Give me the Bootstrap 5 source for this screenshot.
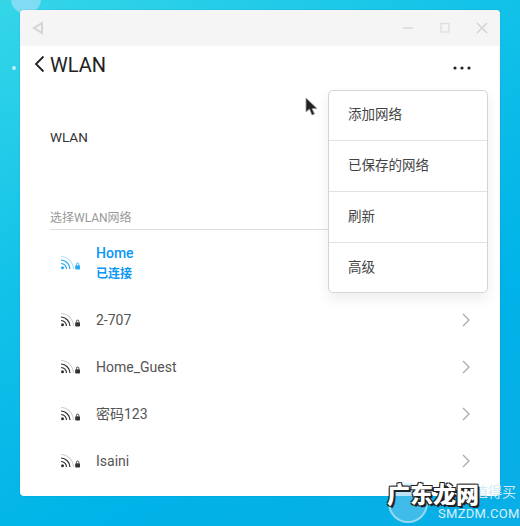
<!DOCTYPE html>
<html lang="zh-CN">
<head>
  <meta charset="UTF-8" />
  <meta name="viewport" content="width=device-width, initial-scale=1" />
  <title>WLAN</title>
  <link href="https://cdn.jsdelivr.net/npm/bootstrap@5.3.3/dist/css/bootstrap.min.css" rel="stylesheet" />
  <style>
    html, body { height: 526px; overflow: hidden; }
    body {
      font-family: Roboto, "Noto Sans CJK SC", sans-serif;
      background: linear-gradient(150deg, #35d6e8 0%, #12c2e8 35%, #00b3e8 70%, #0aaee6 100%);
      padding: 10px 20px 30px;
      position: relative;
    }
    .glow { position: absolute; left: 11px; top: -16px; width: 30px; height: 30px; border-radius: 50%; background: #7fdcf3; }
    .spark { position: absolute; left: 12px; top: 66px; width: 4px; height: 4px; border-radius: 50%; background: #bdf0f8; }
    .win { width: 480px; height: 486px; background: #fff; border-radius: 4px; overflow: hidden; position: relative; box-shadow: 0 0 1px rgba(0,80,120,.6); }
    .titlebar { height: 36px; background: #f5f5f5; padding: 0 12px; }
    .titlebar svg { display: block; }
    .head { height: 36px; padding: 0 29px 0 14px; color: #222; }
    .head-title { font-size: 20px; line-height: 36px; margin-left: 5px; padding-top: 1px; }
    .head-dots { margin-top: 8px; }
    .wlan-row { height: 88px; margin-top: 33px; padding-left: 30px; font-size: 13.5px; color: #333; padding-top: 12px; line-height: 20px; }
    .sec-label { margin: 7px 29px 0 30px; padding-bottom: 3px; font-size: 12px; line-height: 16px; color: #999; border-bottom: 1px solid #dedede; }
    .net { height: 47px; padding: 0 30px 0 41px; font-size: 14px; color: #555; }
    .net-first { height: 66px; }
    .net-name { margin-left: 15px; flex: 1 1 auto; line-height: 20px; }
    .net-first .net-name { color: #0a97f8; font-weight: 500; font-size: 14px; }
    .net-state { font-size: 12px; font-weight: 700; padding-top: 1px; }
    .pop {
      position: absolute; left: 308px; top: 80px; width: 160px;
      background: #fff; border: 1px solid #d4d4d4; border-radius: 5px;
      box-shadow: 0 6px 14px rgba(0,0,0,.07);
    }
    .pop-item { height: 51px; padding-left: 19px; font-size: 13.5px; color: #444; line-height: 49px; border-bottom: 1px solid #e2e2e2; }
    .pop-item:first-child { height: 50px; line-height: 47px; }
    .pop-item:last-child { height: 49px; border-bottom: 0; }
    .cursor { position: absolute; left: 285px; top: 87px; }
    .wm { position: absolute; left: 386px; top: 484px; width: 134px; height: 42px; color: #fff; }
    .wm-cn { position: absolute; left: 1px; top: -3px; font-size: 23px; line-height: 30px; font-weight: 900; white-space: nowrap;
      text-shadow: 1px 1px 0 #222, -1px -1px 0 #222, 1px -1px 0 #222, -1px 1px 0 #222, 2px 2px 0 #222; }
    .wm-side { position: absolute; left: 88px; top: -2px; font-size: 14px; line-height: 20px; color: #cfe9f5; white-space: nowrap; }
    .wm-en { position: absolute; left: 52px; top: 21px; font-size: 13px; line-height: 18px; letter-spacing: .3px; color: #d8f0fa; white-space: nowrap; }
    .wm-disc { position: absolute; left: 2px; top: -1px; width: 40px; height: 40px; border-radius: 50%; background: rgba(120,200,235,.5); border: 2px solid rgba(255,255,255,.45); }
  </style>
</head>
<body>
  <div class="glow"></div>
  <div class="spark"></div>

  <div class="win">
    <div class="titlebar d-flex align-items-center">
      <svg width="12" height="14" viewBox="0 0 12 14"><path d="M10 2 L2 7 L10 12 Z" fill="none" stroke="#d4d4d4" stroke-width="2"/></svg>
      <div class="d-flex align-items-center ms-auto gap-4">
        <svg width="11" height="12" viewBox="0 0 11 12"><path d="M0 6H10" stroke="#d9d9d9" stroke-width="1.5"/></svg>
        <svg width="14" height="12" viewBox="0 0 14 12"><rect x="3" y="1.5" width="8" height="8.5" fill="none" stroke="#dedede" stroke-width="1.3"/></svg>
        <svg width="12" height="12" viewBox="0 0 12 12"><path d="M1 1L11 11M11 1L1 11" stroke="#d6d6d6" stroke-width="1.7"/></svg>
      </div>
    </div>

    <div class="head d-flex align-items-center">
      <svg width="11" height="18" viewBox="0 0 11 18"><path d="M9.5 1.5 L2 9 L9.5 16.5" fill="none" stroke="#222" stroke-width="1.8"/></svg>
      <span class="head-title">WLAN</span>
      <svg class="ms-auto head-dots" width="18" height="4" viewBox="0 0 18 4"><circle cx="2" cy="2" r="1.6" fill="#222"/><circle cx="9" cy="2" r="1.6" fill="#222"/><circle cx="16" cy="2" r="1.6" fill="#222"/></svg>
    </div>

    <div class="wlan-row">WLAN</div>
    <div class="sec-label">选择WLAN网络</div>

    <div id="nets"></div>

    <div class="pop">
      <div class="pop-item">添加网络</div>
      <div class="pop-item">已保存的网络</div>
      <div class="pop-item">刷新</div>
      <div class="pop-item">高级</div>
    </div>

    <svg class="cursor" width="14" height="20" viewBox="0 0 14 20"><path d="M1 1 L1 15 L4.5 12 L7 18 L9.5 17 L7 11.5 L12 11.5 Z" fill="#222" stroke="#999" stroke-width=".8"/></svg>
  </div>

  <div class="wm">
    <div class="wm-disc"></div>
    <div class="wm-side">值得买</div>
    <div class="wm-en">SMZDM.COM</div>
    <div class="wm-cn">广东龙网</div>
  </div>

  <script>
    const nets = [
      { name: "2-707" },
      { name: "Home_Guest" },
      { name: "密码123" },
      { name: "Isaini" }
    ];

    function wifiIcon(main, faint) {
      return `<svg width="20" height="16" viewBox="0 0 20 16">
        <path d="M0 1.5 A13 13 0 0 1 12.5 14" fill="none" stroke="${faint}" stroke-width="1.1"/>
        <path d="M0 5 A9.5 9.5 0 0 1 9 14" fill="none" stroke="${main}" stroke-width="1.2"/>
        <path d="M0 8.5 A6 6 0 0 1 5.5 14" fill="none" stroke="${main}" stroke-width="1.2"/>
        <circle cx="1.5" cy="12.7" r="1.5" fill="${main}"/>
        <rect x="14.2" y="10.2" width="4.8" height="4.3" rx=".8" fill="${main}"/>
        <path d="M15.4 10.2 V9.3 A1.2 1.2 0 0 1 17.8 9.3 V10.2" fill="none" stroke="${main}" stroke-width=".9"/>
      </svg>`;
    }

    const chevron = `<svg width="8" height="14" viewBox="0 0 8 14"><path d="M1 1 L7 7 L1 13" fill="none" stroke="#aaa" stroke-width="1.3"/></svg>`;

    let html = `<div class="net net-first d-flex align-items-center">
      ${wifiIcon("#2aa9f2", "#b5e0fa")}
      <div class="net-name">Home<div class="net-state">已连接</div></div>
    </div>`;
    nets.forEach((n) => {
      html += `<div class="net d-flex align-items-center">
        ${wifiIcon("#333", "#cfcfcf")}
        <div class="net-name">${n.name}</div>
        ${chevron}
      </div>`;
    });
    document.getElementById("nets").innerHTML = html;
  </script>
  <script src="https://cdn.jsdelivr.net/npm/bootstrap@5.3.3/dist/js/bootstrap.bundle.min.js"></script>
</body>
</html>
